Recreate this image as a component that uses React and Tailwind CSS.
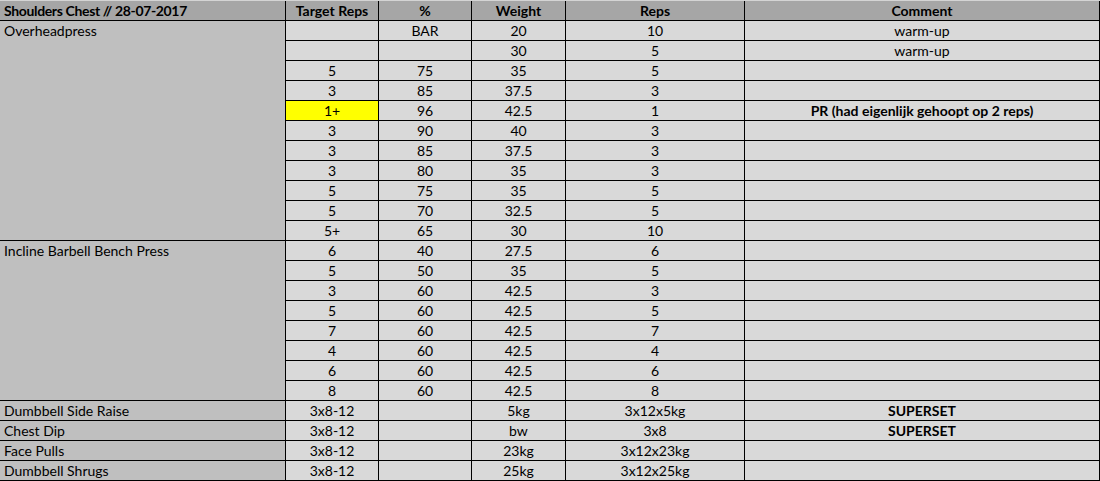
const overhead = [
  ['', 'BAR', '20', '10', 'warm-up'],
  ['', '', '30', '5', 'warm-up'],
  ['5', '75', '35', '5', ''],
  ['3', '85', '37.5', '3', ''],
  ['1+', '96', '42.5', '1', 'PR (had eigenlijk gehoopt op 2 reps)'],
  ['3', '90', '40', '3', ''],
  ['3', '85', '37.5', '3', ''],
  ['3', '80', '35', '3', ''],
  ['5', '75', '35', '5', ''],
  ['5', '70', '32.5', '5', ''],
  ['5+', '65', '30', '10', ''],
]

const incline = [
  ['6', '40', '27.5', '6', ''],
  ['5', '50', '35', '5', ''],
  ['3', '60', '42.5', '3', ''],
  ['5', '60', '42.5', '5', ''],
  ['7', '60', '42.5', '7', ''],
  ['4', '60', '42.5', '4', ''],
  ['6', '60', '42.5', '6', ''],
  ['8', '60', '42.5', '8', ''],
]

const accessories = [
  ['Dumbbell Side Raise', '3x8-12', '', '5kg', '3x12x5kg', 'SUPERSET'],
  ['Chest Dip', '3x8-12', '', 'bw', '3x8', 'SUPERSET'],
  ['Face Pulls', '3x8-12', '', '23kg', '3x12x23kg', ''],
  ['Dumbbell Shrugs', '3x8-12', '', '25kg', '3x12x25kg', ''],
]

const cell = 'border-r border-b border-black flex items-center justify-center whitespace-nowrap'

function DataCells({ row, highlight }) {
  return (
    <>
      <div className={`${cell} ${highlight ? 'bg-[#ffff00]' : 'bg-[#d9d9d9]'}`}>{row[0]}</div>
      <div className={`${cell} bg-[#d9d9d9]`}>{row[1]}</div>
      <div className={`${cell} bg-[#d9d9d9]`}>{row[2]}</div>
      <div className={`${cell} bg-[#d9d9d9]`}>{row[3]}</div>
      <div className={`${cell} bg-[#d9d9d9] ${row[4].startsWith('PR') ? 'font-bold' : ''}`}>{row[4]}</div>
    </>
  )
}

function Exercise({ name, rows, start }) {
  return (
    <>
      <div
        className="border-r border-b border-black bg-[#bfbfbf] pl-1"
        style={{ gridRow: `${start} / span ${rows.length}`, gridColumn: '1' }}
      >
        <div className="h-[19px] flex items-center">{name}</div>
      </div>
      {rows.map((r, i) => (
        <DataCells key={i} row={r} highlight={r[0] === '1+'} />
      ))}
    </>
  )
}

export default function App() {
  return (
    <div className="w-[1100px] h-[481px] bg-white text-black text-[14px] leading-none" style={{ fontFamily: 'Lato, "Liberation Sans", sans-serif' }}>
      <div className="h-px bg-[#d4d4d4]" />
      <div className="grid grid-cols-[286px_93px_93px_94px_179px_355px] auto-rows-[20px]">
        {/* Header */}
        <div className="border-r border-b border-black bg-[#a6a6a6] font-bold flex items-center pl-1 tracking-[-0.35px]">Shoulders Chest // 28-07-2017</div>
        {['Target Reps', '%', 'Weight', 'Reps', 'Comment'].map((h) => (
          <div key={h} className={`${cell} bg-[#a6a6a6] font-bold`}>{h}</div>
        ))}

        <Exercise name="Overheadpress" rows={overhead} start={2} />
        <Exercise name="Incline Barbell Bench Press" rows={incline} start={13} />

        {accessories.map((r) => (
          <div key={r[0]} className="contents">
            <div className="border-r border-b border-black bg-[#bfbfbf] flex items-center pl-1">{r[0]}</div>
            <div className={`${cell} bg-[#d9d9d9]`}>{r[1]}</div>
            <div className={`${cell} bg-[#d9d9d9]`}>{r[2]}</div>
            <div className={`${cell} bg-[#d9d9d9]`}>{r[3]}</div>
            <div className={`${cell} bg-[#d9d9d9]`}>{r[4]}</div>
            <div className={`${cell} bg-[#d9d9d9] font-bold`}>{r[5]}</div>
          </div>
        ))}
      </div>
    </div>
  )
}
